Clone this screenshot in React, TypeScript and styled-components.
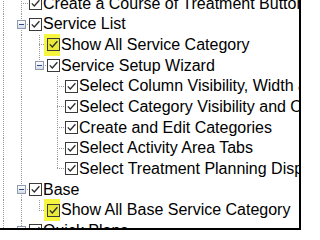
import React from 'react';
import styled, { createGlobalStyle } from 'styled-components';

const Global = createGlobalStyle`
  html, body { margin: 0; padding: 0; background: #fff; }
`;

const dot = '#9a9a9a';
const vLine = `repeating-linear-gradient(to bottom, ${dot} 0 1px, transparent 1px 2px)`;
const hLine = `repeating-linear-gradient(to right, ${dot} 0 1px, transparent 1px 2px)`;

const Viewport = styled.div`
  width: 299px;
  height: 228px;
  border-right: 2px solid #000;
  border-bottom: 2px solid #000;
  overflow: hidden;
  background: #fff;
`;

const Tree = styled.ul`
  list-style: none;
  margin: -6.67px 0 0 -6px;
  padding: 0;
  font-family: "Liberation Sans", Arial, sans-serif;
  font-size: 16px;
  color: #000;
`;

const Row = styled.li`
  display: flex;
  align-items: center;
  height: 20.67px;
  white-space: nowrap;
`;

const Guide = styled.span<{ $on: boolean }>`
  flex: none;
  width: 18px;
  align-self: stretch;
  background: ${(p) => (p.$on ? `${vLine} 9px 0 / 1px 100% no-repeat` : 'none')};
`;

const Connector = styled.span<{ $last: boolean }>`
  flex: none;
  width: 18px;
  align-self: stretch;
  box-sizing: border-box;
  padding-left: 5px;
  display: flex;
  align-items: center;
  background:
    ${vLine} 9px 0 / 1px ${(p) => (p.$last ? '50%' : '100%')} no-repeat,
    ${hLine} 9px 50% / 9px 1px no-repeat;
`;

const Expander = styled.span<{ $open: boolean }>`
  position: relative;
  width: 9px;
  height: 9px;
  box-sizing: border-box;
  border: 1px solid #8f9aae;
  background: linear-gradient(#ffffff, #d6dbe5);
  display: flex;
  align-items: center;
  justify-content: center;
  &::after {
    content: '';
    width: 5px;
    height: 1px;
    background: #2f4c86;
  }
  &::before {
    content: '';
    position: absolute;
    left: 3px;
    top: 1px;
    width: 1px;
    height: 5px;
    background: #2f4c86;
    display: ${(p) => (p.$open ? 'none' : 'block')};
  }
`;

const CheckWrap = styled.span<{ $hl?: boolean }>`
  flex: none;
  width: 16px;
  height: 22px;
  margin-left: -4px;
  padding-left: 3px;
  box-sizing: border-box;
  display: flex;
  align-items: center;
  background: ${(p) => (p.$hl ? '#f6f63e' : 'transparent')};
`;

const Box = styled.span<{ $hl?: boolean }>`
  width: 13px;
  height: 13px;
  box-sizing: border-box;
  border: 1px solid #3a3a3a;
  background: ${(p) => (p.$hl ? '#e9e93a' : '#fff')};
  display: flex;
  align-items: center;
  justify-content: center;
`;

const Label = styled.span`
  margin-left: 1px;
  line-height: 20px;
`;

type Node = {
  label: string;
  guides: boolean[];
  last?: boolean;
  children?: 'open' | 'closed';
  hl?: boolean;
};

const rows: Node[] = [
  { label: 'Create a Course of Treatment Button', guides: [true] },
  { label: 'Service List', guides: [true], children: 'open' },
  { label: 'Show All Service Category', guides: [true, true], hl: true },
  { label: 'Service Setup Wizard', guides: [true, true], children: 'open', last: true },
  { label: 'Select Column Visibility, Width and Order', guides: [true, true, false] },
  { label: 'Select Category Visibility and Order', guides: [true, true, false] },
  { label: 'Create and Edit Categories', guides: [true, true, false] },
  { label: 'Select Activity Area Tabs', guides: [true, true, false] },
  { label: 'Select Treatment Planning Display', guides: [true, true, false], last: true },
  { label: 'Base', guides: [true], children: 'open' },
  { label: 'Show All Base Service Category', guides: [true, true], hl: true, last: true },
  { label: 'Quick Plans', guides: [true], children: 'closed' },
];

const Check: React.FC<{ hl?: boolean }> = ({ hl }) => (
  <CheckWrap $hl={hl}>
    <Box $hl={hl}>
      <svg width="11" height="11" viewBox="0 0 11 11">
        <polyline points="1.8,5.4 4.3,8 9.4,2.2" fill="none" stroke="#2a2a2a" strokeWidth="1.3" />
      </svg>
    </Box>
  </CheckWrap>
);

export default function App() {
  return (
    <>
      <Global />
      <Viewport>
        <Tree>
          {rows.map((r, i) => (
            <Row key={i}>
              {r.guides.map((g, j) => (
                <Guide key={j} $on={g} />
              ))}
              <Connector $last={!!r.last}>
                {r.children && <Expander $open={r.children === 'open'} />}
              </Connector>
              <Check hl={r.hl} />
              <Label>{r.label}</Label>
            </Row>
          ))}
        </Tree>
      </Viewport>
    </>
  );
}
